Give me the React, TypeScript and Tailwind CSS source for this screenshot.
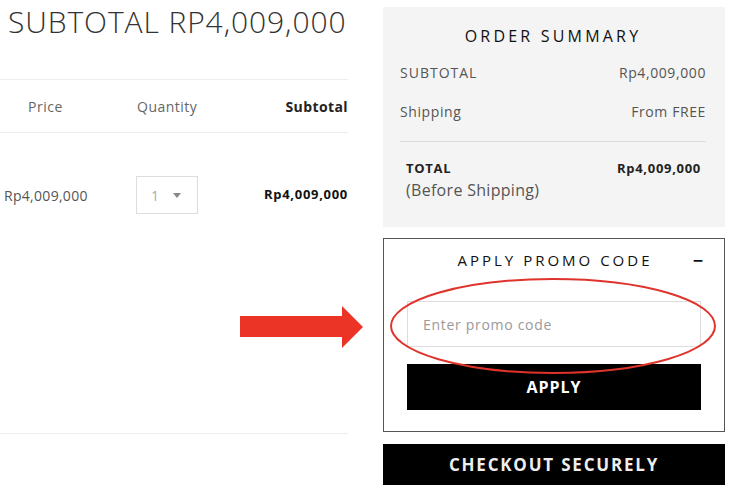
const font = { fontFamily: '"Open Sans", "Liberation Sans", sans-serif' }

function CartTable() {
  return (
    <div className="w-[350px] shrink-0 pr-[2px]">
      <h1 className="whitespace-nowrap pl-[8px] pt-[2px] text-[30px] font-light leading-[40px] tracking-[0.9px] text-[#333]">
        SUBTOTAL RP4,009,000
      </h1>
      <div className="mt-[37px] border-t border-[#eee]">
        <div className="flex h-[52px] items-center text-[14px] tracking-[0.5px] text-[#666]">
          <span className="w-[130px] pl-[28px]">Price</span>
          <span className="w-[110px] pl-[7px]">Quantity</span>
          <span className="flex-1 text-right font-bold tracking-[0.4px] text-[#222]">Subtotal</span>
        </div>
      </div>
      <div className="border-t border-[#eee]">
        <div className="flex h-[124px] items-center text-[14px]">
          <span className="w-[136px] pl-[4px] tracking-[0.3px] text-[#555]">Rp4,009,000</span>
          <div className="flex h-[38px] w-[62px] items-center gap-[14px] border border-[#ddd] pl-[14px] text-[#aaa]">
            <span>1</span>
            <svg width="8" height="5" viewBox="0 0 8 5">
              <path d="M0 0h8L4 5z" fill="#888" />
            </svg>
          </div>
          <span className="flex-1 text-right text-[13px] font-bold tracking-[0.7px] text-[#111]">Rp4,009,000</span>
        </div>
      </div>
      <div className="mt-[176px] border-t border-[#eee]" />
    </div>
  )
}

function OrderSummary() {
  return (
    <div className="bg-[#f4f4f4] pb-[26px] pl-[17px] pr-[19px] pt-[17px]">
      <h2 className="text-center text-[16px] font-medium tracking-[3.2px] text-[#111]">ORDER SUMMARY</h2>
      <div className="mt-[14px] flex justify-between text-[14px] tracking-[0.6px] text-[#555]">
        <span className="tracking-[1px]">SUBTOTAL</span>
        <span>Rp4,009,000</span>
      </div>
      <div className="mt-[18px] flex justify-between text-[14px] tracking-[0.6px] text-[#555]">
        <span>Shipping</span>
        <span>From FREE</span>
      </div>
      <div className="mt-[19px] border-t border-[#ddd] pl-[6px] pr-[5px] pt-[17px]">
        <div className="flex justify-between text-[13px] font-bold tracking-[0.7px] text-[#222]">
          <span>TOTAL</span>
          <span>Rp4,009,000</span>
        </div>
        <div className="text-[16px] leading-[22px] tracking-[0.3px] text-[#555]">(Before Shipping)</div>
      </div>
    </div>
  )
}

function PromoCode() {
  return (
    <div className="relative mt-[11px] border border-[#555] px-[23px] pb-[21px] pt-[10px]">
      <div className="flex items-center">
        <span className="flex-1 pl-[48px] text-center text-[15px] font-medium tracking-[3px] text-[#111]">
          APPLY PROMO CODE
        </span>
        <span className="-mr-[2px] w-[48px] text-right text-[18px] font-bold leading-none text-[#111]">−</span>
      </div>
      <div className="mt-[30px] flex h-[46px] items-center border border-[#ddd] pl-[15px] text-[14px] tracking-[0.7px] text-[#999]">
        Enter promo code
      </div>
      <button className="mt-[17px] flex h-[46px] w-full items-center justify-center bg-black text-[16px] font-bold tracking-[1px] text-white">
        APPLY
      </button>
      <svg
        className="pointer-events-none absolute left-[4px] top-[37px]"
        width="330"
        height="100"
        viewBox="0 0 330 100"
      >
        <ellipse cx="165" cy="50" rx="162" ry="47" fill="none" stroke="#e0332b" strokeWidth="2" />
      </svg>
    </div>
  )
}

export default function App() {
  return (
    <div className="relative flex h-[494px] w-[736px] overflow-hidden bg-white" style={font}>
      <CartTable />
      <div className="ml-[33px] w-[342px] pt-[7px]">
        <OrderSummary />
        <PromoCode />
        <button className="mt-[12px] flex h-[41px] w-full items-center justify-center bg-black text-[17px] font-bold tracking-[1.8px] text-[#eee]">
          CHECKOUT SECURELY
        </button>
      </div>
      <svg className="absolute left-[240px] top-[306px]" width="123" height="42" viewBox="0 0 123 42">
        <path d="M0 10h102V0l21 21-21 21V31H0z" fill="#eb3426" />
      </svg>
    </div>
  )
}
